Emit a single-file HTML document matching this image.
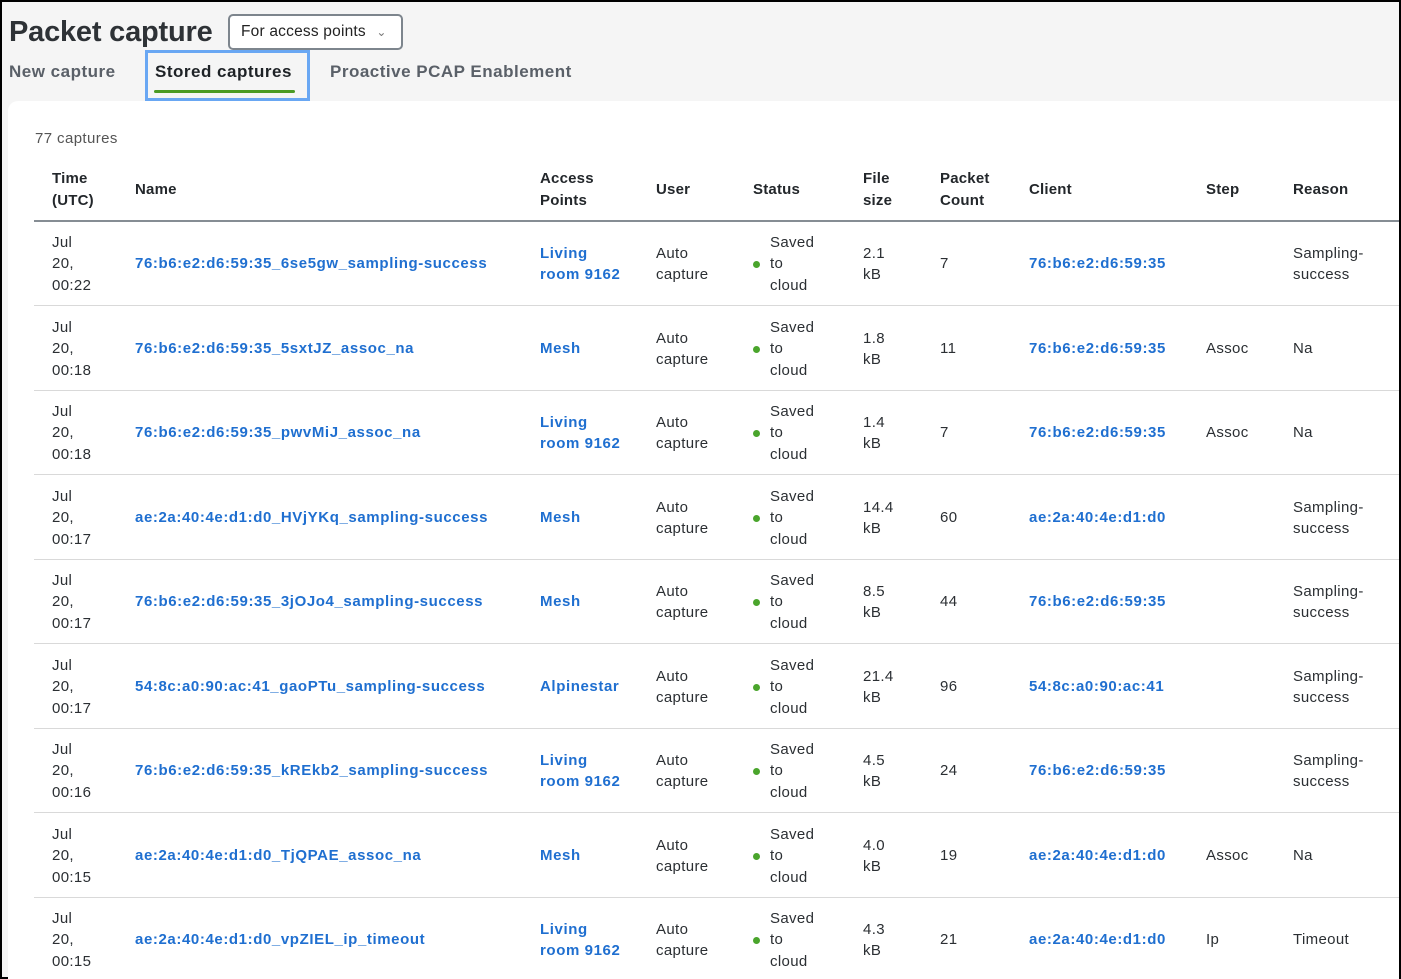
<!DOCTYPE html>
<html><head><meta charset="utf-8"><style>
*{margin:0;padding:0;box-sizing:border-box}
html,body{width:1401px;height:979px;overflow:hidden}
body{background:#f5f5f5;font-family:"Liberation Sans",sans-serif;color:#2b2f33;position:relative;border:2px solid #000}
.abs{position:absolute}
h1{position:absolute;left:7px;top:14px;font-size:29px;font-weight:bold;color:#2e3236;letter-spacing:-0.2px}
.dd{left:226px;top:12px;width:175px;height:36px;border:2px solid #7d858d;border-radius:5px;background:#fff;font-size:15.5px;padding:7px 0 0 11px;color:#222;letter-spacing:0.2px}
.tab{top:60px;font-size:17px;font-weight:bold;color:#5a6068;letter-spacing:0.5px}
.focus{left:143px;top:48px;width:165px;height:51px;border:3px solid #69a7f3}
.ul{left:152px;top:88px;width:141px;height:3px;background:#4a9a24;border-radius:2px}
.panel{left:6px;top:99px;width:1391px;height:880px;background:#fff;border-top-left-radius:10px}
.cnt{left:33px;top:128px;font-size:15px;color:#555;letter-spacing:0.4px}
.hd{font-size:15px;font-weight:bold;color:#23272b;line-height:22px;letter-spacing:0.2px}
.hline{left:32px;top:218px;width:1365px;height:2px;background:#868d94}
.row{position:absolute;left:32px;width:1365px;height:85px;border-bottom:1px solid #d9d9d9}
.c{position:absolute;top:1px;height:84px;display:flex;align-items:center;font-size:15px;line-height:21.5px;color:#2b2f33;letter-spacing:0.35px}
.lk{color:#1f6fd0;font-weight:bold;letter-spacing:0.6px}
.dot{display:inline-block;width:7px;height:7px;border-radius:50%;background:#4aa52c;margin-right:10px}
</style></head><body>
<h1>Packet capture</h1>
<div class="abs dd">For access points <span style="font-size:12px;color:#777;margin-left:6px">&#8964;</span></div>
<div class="abs tab" style="left:7px">New capture</div>
<div class="abs tab" style="left:153px;color:#1e2226">Stored captures</div>
<div class="abs tab" style="left:328px">Proactive PCAP Enablement</div>
<div class="abs focus"></div>
<div class="abs ul"></div>
<div class="abs panel"></div>
<div class="abs cnt">77 captures</div>
<div class="abs hd" style="left:50px;top:166px">Time<br>(UTC)</div>
<div class="abs hd" style="left:133px;top:177px">Name</div>
<div class="abs hd" style="left:538px;top:166px">Access<br>Points</div>
<div class="abs hd" style="left:654px;top:177px">User</div>
<div class="abs hd" style="left:751px;top:177px">Status</div>
<div class="abs hd" style="left:861px;top:166px">File<br>size</div>
<div class="abs hd" style="left:938px;top:166px">Packet<br>Count</div>
<div class="abs hd" style="left:1027px;top:177px">Client</div>
<div class="abs hd" style="left:1204px;top:177px">Step</div>
<div class="abs hd" style="left:1291px;top:177px">Reason</div>
<div class="abs hline"></div>
<div class="row" style="top:219px"><div class="c" style="left:18px">Jul<br>20,<br>00:22</div><div class="c lk" style="left:101px">76:b6:e2:d6:59:35_6se5gw_sampling-success</div><div class="c lk" style="left:506px">Living<br>room 9162</div><div class="c" style="left:622px">Auto<br>capture</div><div class="c" style="left:719px"><span class="dot"></span><span>Saved<br>to<br>cloud</span></div><div class="c" style="left:829px">2.1<br>kB</div><div class="c" style="left:906px">7</div><div class="c lk" style="left:995px">76:b6:e2:d6:59:35</div><div class="c" style="left:1172px"></div><div class="c" style="left:1259px">Sampling-<br>success</div></div>
<div class="row" style="top:304px"><div class="c" style="left:18px">Jul<br>20,<br>00:18</div><div class="c lk" style="left:101px">76:b6:e2:d6:59:35_5sxtJZ_assoc_na</div><div class="c lk" style="left:506px">Mesh</div><div class="c" style="left:622px">Auto<br>capture</div><div class="c" style="left:719px"><span class="dot"></span><span>Saved<br>to<br>cloud</span></div><div class="c" style="left:829px">1.8<br>kB</div><div class="c" style="left:906px">11</div><div class="c lk" style="left:995px">76:b6:e2:d6:59:35</div><div class="c" style="left:1172px">Assoc</div><div class="c" style="left:1259px">Na</div></div>
<div class="row" style="top:388px"><div class="c" style="left:18px">Jul<br>20,<br>00:18</div><div class="c lk" style="left:101px">76:b6:e2:d6:59:35_pwvMiJ_assoc_na</div><div class="c lk" style="left:506px">Living<br>room 9162</div><div class="c" style="left:622px">Auto<br>capture</div><div class="c" style="left:719px"><span class="dot"></span><span>Saved<br>to<br>cloud</span></div><div class="c" style="left:829px">1.4<br>kB</div><div class="c" style="left:906px">7</div><div class="c lk" style="left:995px">76:b6:e2:d6:59:35</div><div class="c" style="left:1172px">Assoc</div><div class="c" style="left:1259px">Na</div></div>
<div class="row" style="top:473px"><div class="c" style="left:18px">Jul<br>20,<br>00:17</div><div class="c lk" style="left:101px">ae:2a:40:4e:d1:d0_HVjYKq_sampling-success</div><div class="c lk" style="left:506px">Mesh</div><div class="c" style="left:622px">Auto<br>capture</div><div class="c" style="left:719px"><span class="dot"></span><span>Saved<br>to<br>cloud</span></div><div class="c" style="left:829px">14.4<br>kB</div><div class="c" style="left:906px">60</div><div class="c lk" style="left:995px">ae:2a:40:4e:d1:d0</div><div class="c" style="left:1172px"></div><div class="c" style="left:1259px">Sampling-<br>success</div></div>
<div class="row" style="top:557px"><div class="c" style="left:18px">Jul<br>20,<br>00:17</div><div class="c lk" style="left:101px">76:b6:e2:d6:59:35_3jOJo4_sampling-success</div><div class="c lk" style="left:506px">Mesh</div><div class="c" style="left:622px">Auto<br>capture</div><div class="c" style="left:719px"><span class="dot"></span><span>Saved<br>to<br>cloud</span></div><div class="c" style="left:829px">8.5<br>kB</div><div class="c" style="left:906px">44</div><div class="c lk" style="left:995px">76:b6:e2:d6:59:35</div><div class="c" style="left:1172px"></div><div class="c" style="left:1259px">Sampling-<br>success</div></div>
<div class="row" style="top:642px"><div class="c" style="left:18px">Jul<br>20,<br>00:17</div><div class="c lk" style="left:101px">54:8c:a0:90:ac:41_gaoPTu_sampling-success</div><div class="c lk" style="left:506px">Alpinestar</div><div class="c" style="left:622px">Auto<br>capture</div><div class="c" style="left:719px"><span class="dot"></span><span>Saved<br>to<br>cloud</span></div><div class="c" style="left:829px">21.4<br>kB</div><div class="c" style="left:906px">96</div><div class="c lk" style="left:995px">54:8c:a0:90:ac:41</div><div class="c" style="left:1172px"></div><div class="c" style="left:1259px">Sampling-<br>success</div></div>
<div class="row" style="top:726px"><div class="c" style="left:18px">Jul<br>20,<br>00:16</div><div class="c lk" style="left:101px">76:b6:e2:d6:59:35_kREkb2_sampling-success</div><div class="c lk" style="left:506px">Living<br>room 9162</div><div class="c" style="left:622px">Auto<br>capture</div><div class="c" style="left:719px"><span class="dot"></span><span>Saved<br>to<br>cloud</span></div><div class="c" style="left:829px">4.5<br>kB</div><div class="c" style="left:906px">24</div><div class="c lk" style="left:995px">76:b6:e2:d6:59:35</div><div class="c" style="left:1172px"></div><div class="c" style="left:1259px">Sampling-<br>success</div></div>
<div class="row" style="top:811px"><div class="c" style="left:18px">Jul<br>20,<br>00:15</div><div class="c lk" style="left:101px">ae:2a:40:4e:d1:d0_TjQPAE_assoc_na</div><div class="c lk" style="left:506px">Mesh</div><div class="c" style="left:622px">Auto<br>capture</div><div class="c" style="left:719px"><span class="dot"></span><span>Saved<br>to<br>cloud</span></div><div class="c" style="left:829px">4.0<br>kB</div><div class="c" style="left:906px">19</div><div class="c lk" style="left:995px">ae:2a:40:4e:d1:d0</div><div class="c" style="left:1172px">Assoc</div><div class="c" style="left:1259px">Na</div></div>
<div class="row" style="top:895px;border-bottom:none"><div class="c" style="left:18px">Jul<br>20,<br>00:15</div><div class="c lk" style="left:101px">ae:2a:40:4e:d1:d0_vpZIEL_ip_timeout</div><div class="c lk" style="left:506px">Living<br>room 9162</div><div class="c" style="left:622px">Auto<br>capture</div><div class="c" style="left:719px"><span class="dot"></span><span>Saved<br>to<br>cloud</span></div><div class="c" style="left:829px">4.3<br>kB</div><div class="c" style="left:906px">21</div><div class="c lk" style="left:995px">ae:2a:40:4e:d1:d0</div><div class="c" style="left:1172px">Ip</div><div class="c" style="left:1259px">Timeout</div></div>
</body></html>
